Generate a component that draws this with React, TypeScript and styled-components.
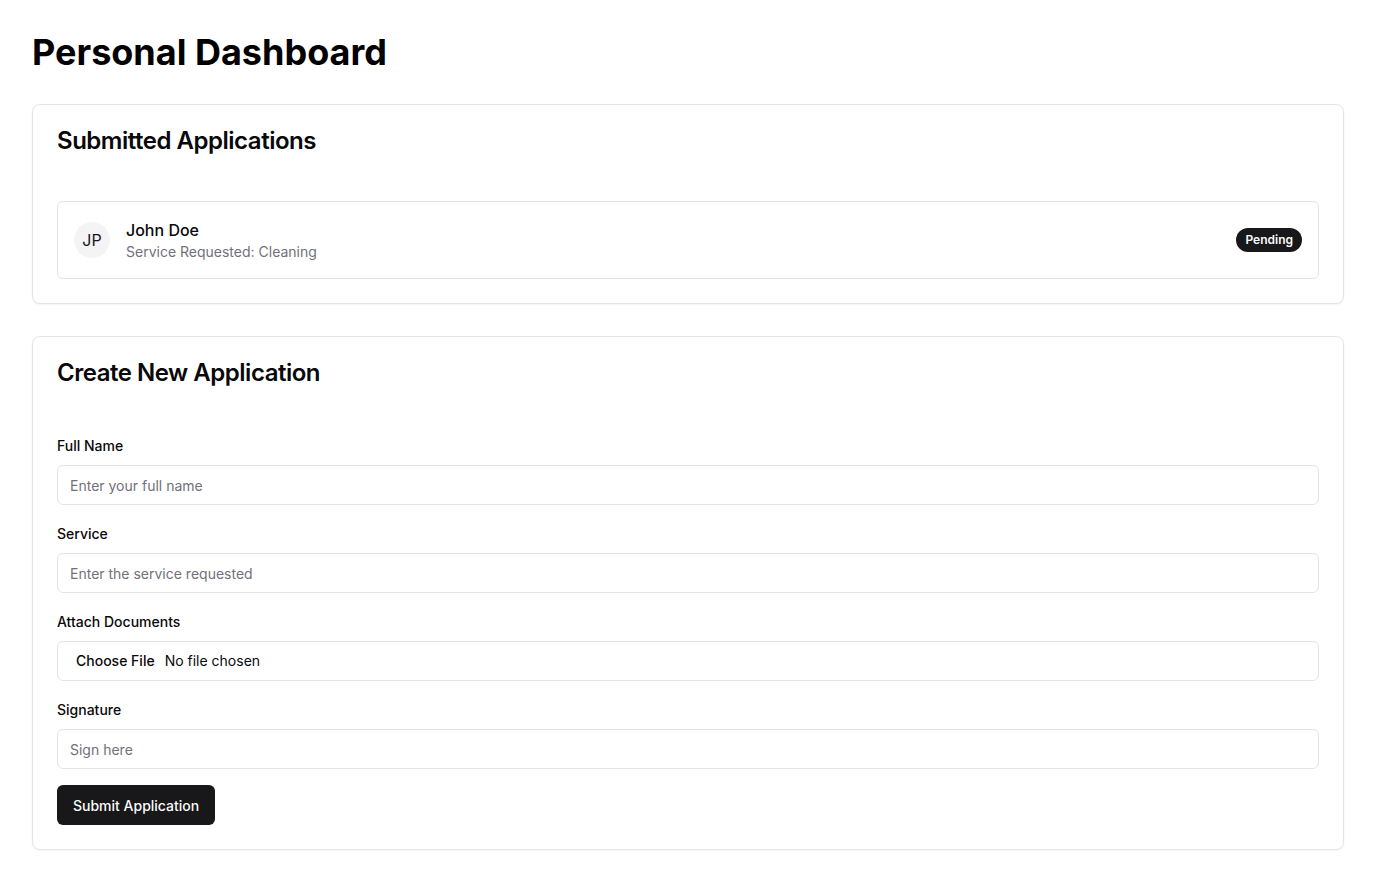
import React from "react";
import styled, { createGlobalStyle } from "styled-components";

const GlobalStyle = createGlobalStyle`
  *, *::before, *::after { box-sizing: border-box; }
  html, body { margin: 0; padding: 0; background: #ffffff; }
  body {
    font-family: Inter, "Noto Sans", "Liberation Sans", sans-serif;
    color: #09090b;
    line-height: 1.5;
  }
`;

const Page = styled.main`
  padding: 32px;
`;

const PageTitle = styled.h1`
  margin: 0 0 32px;
  font-size: 36px;
  line-height: 40px;
  font-weight: 700;
  color: #000;
`;

const Card = styled.section`
  border: 1px solid #e4e4e7;
  border-radius: 8px;
  background: #fff;
  box-shadow: 0 1px 2px rgba(0, 0, 0, 0.05);
  margin-bottom: 32px;
`;

const CardHeader = styled.div`
  padding: 24px;
`;

const CardTitle = styled.h2`
  margin: 0;
  font-size: 24px;
  line-height: 24px;
  font-weight: 600;
  letter-spacing: -0.02em;
`;

const CardContent = styled.div`
  padding: 24px;
`;

const AppItem = styled.div`
  display: flex;
  align-items: center;
  gap: 16px;
  padding: 16px;
  border: 1px solid #e4e4e7;
  border-radius: 6px;
`;

const Avatar = styled.div`
  width: 36px;
  height: 36px;
  border-radius: 50%;
  background: #f4f4f5;
  display: flex;
  align-items: center;
  justify-content: center;
  font-size: 16px;
  color: #18181b;
  flex-shrink: 0;
`;

const ItemText = styled.div`
  flex: 1;
  display: flex;
  flex-direction: column;
`;

const ItemName = styled.div`
  font-size: 16px;
  line-height: 24px;
  font-weight: 500;
`;

const ItemSub = styled.div`
  font-size: 14px;
  line-height: 20px;
  color: #71717a;
`;

const Badge = styled.span`
  display: inline-flex;
  align-items: center;
  padding: 4px 9px;
  border-radius: 9999px;
  background: #18181b;
  color: #fafafa;
  font-size: 12px;
  line-height: 16px;
  font-weight: 600;
`;

const Form = styled.form`
  display: flex;
  flex-direction: column;
  gap: 16px;
  align-items: stretch;
`;

const Field = styled.div`
  display: flex;
  flex-direction: column;
  gap: 8px;
`;

const Label = styled.label`
  font-size: 14px;
  line-height: 23px;
  padding-top: 1px;
  font-weight: 500;
`;

const Input = styled.input`
  height: 40px;
  width: 100%;
  border: 1px solid #e4e4e7;
  border-radius: 6px;
  padding: 8px 12px;
  font-family: inherit;
  font-size: 14px;
  color: #09090b;
  background: #fff;
  outline: none;
  &::placeholder { color: #71717a; }
  &[type="file"] { padding-top: 9px; }
  &::file-selector-button {
    border: 0;
    background: transparent;
    font-family: inherit;
    font-size: 14px;
    font-weight: 500;
    color: #09090b;
    padding: 1px 6px;
    margin-right: 4px;
  }
`;

const SubmitButton = styled.button`
  align-self: flex-start;
  height: 40px;
  padding: 0 16px;
  border: 0;
  border-radius: 6px;
  background: #18181b;
  color: #fafafa;
  font-family: inherit;
  font-size: 14px;
  font-weight: 500;
  cursor: pointer;
`;

export default function App() {
  return (
    <>
      <GlobalStyle />
      <Page>
        <PageTitle>Personal Dashboard</PageTitle>
        <Card>
          <CardHeader>
            <CardTitle>Submitted Applications</CardTitle>
          </CardHeader>
          <CardContent>
            <AppItem>
              <Avatar>JP</Avatar>
              <ItemText>
                <ItemName>John Doe</ItemName>
                <ItemSub>Service Requested: Cleaning</ItemSub>
              </ItemText>
              <Badge>Pending</Badge>
            </AppItem>
          </CardContent>
        </Card>
        <Card>
          <CardHeader>
            <CardTitle>Create New Application</CardTitle>
          </CardHeader>
          <CardContent>
            <Form onSubmit={(e) => e.preventDefault()}>
              <Field>
                <Label htmlFor="name">Full Name</Label>
                <Input id="name" placeholder="Enter your full name" />
              </Field>
              <Field>
                <Label htmlFor="service">Service</Label>
                <Input id="service" placeholder="Enter the service requested" />
              </Field>
              <Field>
                <Label htmlFor="docs">Attach Documents</Label>
                <Input id="docs" type="file" />
              </Field>
              <Field>
                <Label htmlFor="sig">Signature</Label>
                <Input id="sig" placeholder="Sign here" />
              </Field>
              <SubmitButton type="submit">Submit Application</SubmitButton>
            </Form>
          </CardContent>
        </Card>
      </Page>
    </>
  );
}
